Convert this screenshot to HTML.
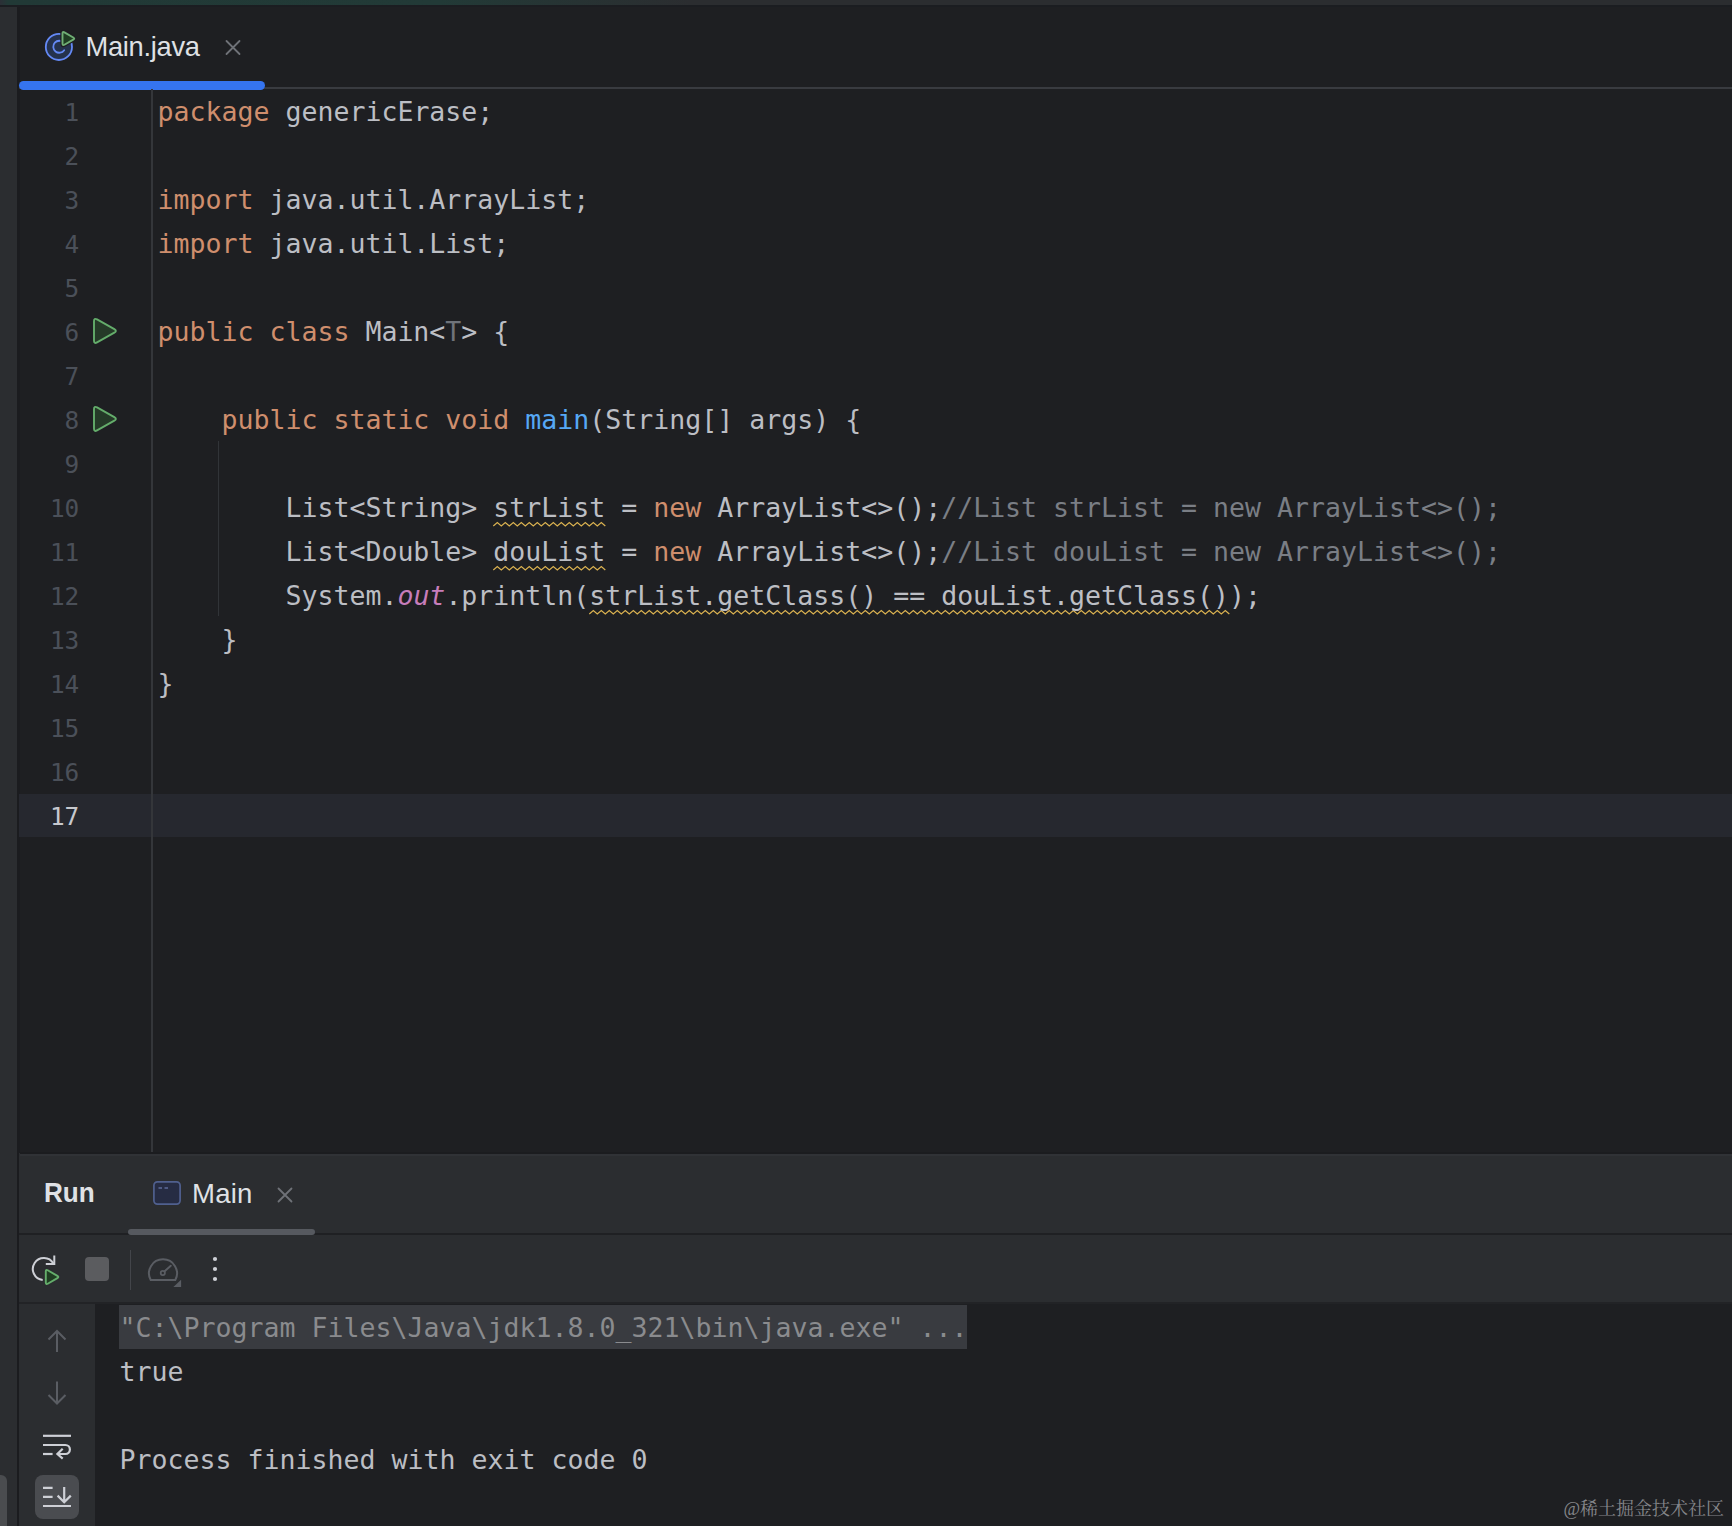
<!DOCTYPE html>
<html lang="en">
<head>
<meta charset="utf-8">
<title>Main.java</title>
<style>
html,body{margin:0;padding:0;}
body{width:1732px;height:1526px;overflow:hidden;background:#1e1f22;position:relative;font-family:"Liberation Sans","Noto Sans CJK SC",sans-serif;}
.abs{position:absolute;}
#topstrip{left:0;top:0;width:1732px;height:5px;background:linear-gradient(to right,#2b2f36 0px,#213936 8px,#223a37 440px,#2b2d30 690px,#2b2d30 100%);}
#topline{left:0;top:5px;width:1732px;height:2px;background:#1b1d21;}
#leftstrip{left:0;top:7px;width:17px;height:1519px;background:#2b2d30;}
#leftline{left:17px;top:7px;width:2.6px;height:1519px;background:#1b1c1f;}
/* editor tab */
#tabline{left:19px;top:87.1px;width:1713px;height:1.7px;background:#393b40;}
#tabblue{left:19px;top:80.5px;width:246px;height:9px;border-radius:4.5px;background:#3574f0;}
#tabtext{left:85.5px;top:30.3px;font-size:27.3px;line-height:34px;color:#dfe1e5;letter-spacing:-0.3px;white-space:pre;}
/* gutter */
#gutline{left:151.4px;top:89px;width:1.7px;height:1063px;background:#34363a;}
.ln{position:absolute;left:19px;width:60.3px;margin-top:0.8px;text-align:right;font-family:"DejaVu Sans Mono","Liberation Mono",monospace;font-size:24.4px;line-height:44px;height:44px;color:#4b5059;white-space:pre;}
.ln.cur{color:#c6c8ce;}
#caretrow{left:19.4px;top:794px;width:1713px;height:42.5px;background:#26282f;}
.cl{position:absolute;left:157.5px;font-family:"DejaVu Sans Mono","Liberation Mono",monospace;font-size:26.57px;line-height:44px;height:44px;color:#bcbec4;white-space:pre;}
.k{color:#cf8e6d;}
.m{color:#56a8f5;}
.c{color:#7a7e85;}
.s{color:#c77dbb;font-style:italic;}
.u{color:#6f737a;}
.w{}
#indent{left:217.5px;top:441px;width:1.5px;height:175px;background:#313438;}

/* run panel */
#runbg{left:19px;top:1153px;width:1713px;height:150px;background:#2b2d30;}
#runtop{left:19.6px;top:1151.8px;width:1713px;height:1.8px;background:#1b1c1f;}
#runhl{left:19.6px;top:1153.6px;width:1713px;height:2px;background:#303236;}
#runhdrline{left:19px;top:1233px;width:1713px;height:2px;background:#1f2023;}
#runul{left:128px;top:1229px;width:187px;height:6px;border-radius:3px;background:#56595f;}
#runbot{left:19px;top:1302px;width:1713px;height:2px;background:#222326;}
#runtitle{left:43.5px;top:1176px;font-size:27.8px;line-height:34px;font-weight:bold;transform-origin:0 0;transform:scaleX(0.94);color:#dfe1e5;white-space:pre;}
#runtab{left:192px;top:1176.5px;font-size:27.6px;line-height:34px;color:#dfe1e5;letter-spacing:0.2px;white-space:pre;}
#leftcol{left:19px;top:1304px;width:76px;height:222px;background:#2b2d30;}
#fold{left:119px;top:1304.7px;width:848px;height:44.2px;background:#393b40;}
.co{position:absolute;left:119.5px;font-family:"DejaVu Sans Mono","Liberation Mono",monospace;font-size:26.58px;line-height:44px;height:44px;color:#bcbec4;white-space:pre;}
#sel{left:35px;top:1475px;width:44px;height:44px;border-radius:8px;background:#4a4c50;}
#lhandle{left:0;top:1474.5px;width:7px;height:60px;border-radius:0 6px 0 0;background:#4a4c4f;}
#sep{left:129.5px;top:1250px;width:1.5px;height:40px;background:#43454a;}
#wm{right:8px;top:1495.5px;font-family:"Liberation Serif","Noto Serif CJK SC",serif;font-size:18px;line-height:26px;color:#85868a;white-space:pre;}
</style>
</head>
<body>
<div class="abs" id="topstrip"></div>
<div class="abs" id="topline"></div>
<div class="abs" id="leftstrip"></div>
<div class="abs" id="leftline"></div>

<!-- EDITOR TAB -->
<div class="abs" id="tabline"></div>
<div class="abs" id="tabblue"></div>
<div class="abs" id="tabtext">Main.java</div>
<svg class="abs" style="left:0;top:0" width="1732" height="1160" viewBox="0 0 1732 1160" fill="none" stroke-linecap="round" stroke-linejoin="round">
<!-- class icon -->
<circle cx="58.9" cy="46.9" r="13.1" fill="#25324d" stroke="#6489f5" stroke-width="1.8"/>
<path d="M63.6 42.6 A6 6 0 1 0 64.2 50.2" stroke="#6489f5" stroke-width="1.8"/>
<path d="M64.41 32.39 Q62.50 31.30 62.50 33.50 L62.50 43.60 Q62.50 45.80 64.41 44.71 L73.29 39.64 Q75.20 38.55 73.29 37.46 Z" fill="#1e1f22" stroke="#1e1f22" stroke-width="4.4"/>
<path d="M64.41 32.39 Q62.50 31.30 62.50 33.50 L62.50 43.60 Q62.50 45.80 64.41 44.71 L73.29 39.64 Q75.20 38.55 73.29 37.46 Z" fill="#1f3d22" stroke="#6fae74" stroke-width="1.9"/>
<!-- tab close -->
<path d="M226.5 41 L239.5 54 M239.5 41 L226.5 54" stroke="#6f7278" stroke-width="1.8"/>
<!-- warning squiggles -->
<path d="M493.3 526.0 L497.3 522.6 L501.3 526.0 L505.3 522.6 L509.3 526.0 L513.3 522.6 L517.3 526.0 L521.3 522.6 L525.3 526.0 L529.3 522.6 L533.3 526.0 L537.3 522.6 L541.3 526.0 L545.3 522.6 L549.3 526.0 L553.3 522.6 L557.3 526.0 L561.3 522.6 L565.3 526.0 L569.3 522.6 L573.3 526.0 L577.3 522.6 L581.3 526.0 L585.3 522.6 L589.3 526.0 L593.3 522.6 L597.3 526.0 L601.3 522.6 L605.3 526.0" stroke="#d9b150" stroke-width="1.25" stroke-linecap="butt" stroke-linejoin="miter"/>
<path d="M493.3 570.0 L497.3 566.6 L501.3 570.0 L505.3 566.6 L509.3 570.0 L513.3 566.6 L517.3 570.0 L521.3 566.6 L525.3 570.0 L529.3 566.6 L533.3 570.0 L537.3 566.6 L541.3 570.0 L545.3 566.6 L549.3 570.0 L553.3 566.6 L557.3 570.0 L561.3 566.6 L565.3 570.0 L569.3 566.6 L573.3 570.0 L577.3 566.6 L581.3 570.0 L585.3 566.6 L589.3 570.0 L593.3 566.6 L597.3 570.0 L601.3 566.6 L605.3 570.0" stroke="#d9b150" stroke-width="1.25" stroke-linecap="butt" stroke-linejoin="miter"/>
<path d="M589.3 614.0 L593.3 610.6 L597.3 614.0 L601.3 610.6 L605.3 614.0 L609.3 610.6 L613.3 614.0 L617.3 610.6 L621.3 614.0 L625.3 610.6 L629.3 614.0 L633.3 610.6 L637.3 614.0 L641.3 610.6 L645.3 614.0 L649.3 610.6 L653.3 614.0 L657.3 610.6 L661.3 614.0 L665.3 610.6 L669.3 614.0 L673.3 610.6 L677.3 614.0 L681.3 610.6 L685.3 614.0 L689.3 610.6 L693.3 614.0 L697.3 610.6 L701.3 614.0 L705.3 610.6 L709.3 614.0 L713.3 610.6 L717.3 614.0 L721.3 610.6 L725.3 614.0 L729.3 610.6 L733.3 614.0 L737.3 610.6 L741.3 614.0 L745.3 610.6 L749.3 614.0 L753.3 610.6 L757.3 614.0 L761.3 610.6 L765.3 614.0 L769.3 610.6 L773.3 614.0 L777.3 610.6 L781.3 614.0 L785.3 610.6 L789.3 614.0 L793.3 610.6 L797.3 614.0 L801.3 610.6 L805.3 614.0 L809.3 610.6 L813.3 614.0 L817.3 610.6 L821.3 614.0 L825.3 610.6 L829.3 614.0 L833.3 610.6 L837.3 614.0 L841.3 610.6 L845.3 614.0 L849.3 610.6 L853.3 614.0 L857.3 610.6 L861.3 614.0 L865.3 610.6 L869.3 614.0 L873.3 610.6 L877.3 614.0 L881.3 610.6 L885.3 614.0 L889.3 610.6 L893.3 614.0 L897.3 610.6 L901.3 614.0 L905.3 610.6 L909.3 614.0 L913.3 610.6 L917.3 614.0 L921.3 610.6 L925.3 614.0 L929.3 610.6 L933.3 614.0 L937.3 610.6 L941.3 614.0 L945.3 610.6 L949.3 614.0 L953.3 610.6 L957.3 614.0 L961.3 610.6 L965.3 614.0 L969.3 610.6 L973.3 614.0 L977.3 610.6 L981.3 614.0 L985.3 610.6 L989.3 614.0 L993.3 610.6 L997.3 614.0 L1001.3 610.6 L1005.3 614.0 L1009.3 610.6 L1013.3 614.0 L1017.3 610.6 L1021.3 614.0 L1025.3 610.6 L1029.3 614.0 L1033.3 610.6 L1037.3 614.0 L1041.3 610.6 L1045.3 614.0 L1049.3 610.6 L1053.3 614.0 L1057.3 610.6 L1061.3 614.0 L1065.3 610.6 L1069.3 614.0 L1073.3 610.6 L1077.3 614.0 L1081.3 610.6 L1085.3 614.0 L1089.3 610.6 L1093.3 614.0 L1097.3 610.6 L1101.3 614.0 L1105.3 610.6 L1109.3 614.0 L1113.3 610.6 L1117.3 614.0 L1121.3 610.6 L1125.3 614.0 L1129.3 610.6 L1133.3 614.0 L1137.3 610.6 L1141.3 614.0 L1145.3 610.6 L1149.3 614.0 L1153.3 610.6 L1157.3 614.0 L1161.3 610.6 L1165.3 614.0 L1169.3 610.6 L1173.3 614.0 L1177.3 610.6 L1181.3 614.0 L1185.3 610.6 L1189.3 614.0 L1193.3 610.6 L1197.3 614.0 L1201.3 610.6 L1205.3 614.0 L1209.3 610.6 L1213.3 614.0 L1217.3 610.6 L1221.3 614.0 L1225.3 610.6 L1229.3 614.0" stroke="#d9b150" stroke-width="1.25" stroke-linecap="butt" stroke-linejoin="miter"/>
<!-- gutter run icons -->
<path d="M97.05 319.42 Q94.00 317.70 94.00 321.20 L94.00 340.60 Q94.00 344.10 97.05 342.38 L114.35 332.62 Q117.40 330.90 114.35 329.18 Z" fill="#253a28" stroke="#64ad6b" stroke-width="1.9"/>
<path d="M97.05 407.42 Q94.00 405.70 94.00 409.20 L94.00 428.60 Q94.00 432.10 97.05 430.38 L114.35 420.62 Q117.40 418.90 114.35 417.18 Z" fill="#253a28" stroke="#64ad6b" stroke-width="1.9"/>
</svg>

<!-- EDITOR -->
<div class="abs" id="caretrow"></div>
<div class="abs" id="gutline"></div>
<div class="abs" id="indent"></div>
<div class="ln" style="top:90px">1</div>
<div class="cl" style="top:90px"><span class="k">package</span> genericErase;</div>
<div class="ln" style="top:134px">2</div>
<div class="ln" style="top:178px">3</div>
<div class="cl" style="top:178px"><span class="k">import</span> java.util.ArrayList;</div>
<div class="ln" style="top:222px">4</div>
<div class="cl" style="top:222px"><span class="k">import</span> java.util.List;</div>
<div class="ln" style="top:266px">5</div>
<div class="ln" style="top:310px">6</div>
<div class="cl" style="top:310px"><span class="k">public class</span> Main&lt;<span class="u">T</span>&gt; {</div>
<div class="ln" style="top:354px">7</div>
<div class="ln" style="top:398px">8</div>
<div class="cl" style="top:398px">    <span class="k">public static void</span> <span class="m">main</span>(String[] args) {</div>
<div class="ln" style="top:442px">9</div>
<div class="ln" style="top:486px">10</div>
<div class="cl" style="top:486px">        List&lt;String&gt; <span class="w">strList</span> = <span class="k">new</span> ArrayList&lt;&gt;();<span class="c">//List strList = new ArrayList&lt;&gt;();</span></div>
<div class="ln" style="top:530px">11</div>
<div class="cl" style="top:530px">        List&lt;Double&gt; <span class="w">douList</span> = <span class="k">new</span> ArrayList&lt;&gt;();<span class="c">//List douList = new ArrayList&lt;&gt;();</span></div>
<div class="ln" style="top:574px">12</div>
<div class="cl" style="top:574px">        System.<span class="s">out</span>.println(<span class="w">strList.getClass() == douList.getClass()</span>);</div>
<div class="ln" style="top:618px">13</div>
<div class="cl" style="top:618px">    }</div>
<div class="ln" style="top:662px">14</div>
<div class="cl" style="top:662px">}</div>
<div class="ln" style="top:706px">15</div>
<div class="ln" style="top:750px">16</div>
<div class="ln cur" style="top:794px">17</div>


<div class="abs" id="runbg"></div>
<div class="abs" id="runtop"></div>
<div class="abs" id="runhl"></div>
<div class="abs" id="runhdrline"></div>
<div class="abs" id="runul"></div>
<div class="abs" id="runbot"></div>
<div class="abs" id="runtitle">Run</div>
<div class="abs" id="runtab">Main</div>
<div class="abs" id="sep"></div>
<div class="abs" id="leftcol"></div>
<div class="abs" id="sel"></div>
<div class="abs" id="lhandle"></div>
<div class="abs" id="fold"></div>
<div class="co" style="top:1306px;color:#8a8b8e">"C:\Program Files\Java\jdk1.8.0_321\bin\java.exe" ...</div>
<div class="co" style="top:1350px">true</div>
<div class="co" style="top:1438px">Process finished with exit code 0</div>
<div class="abs" id="wm">@稀土掘金技术社区</div>
<svg class="abs" style="left:0;top:1150px" width="300" height="376" viewBox="0 1150 300 376" fill="none" stroke-linecap="round" stroke-linejoin="round">
<!-- Main tab icon -->
<rect x="153.9" y="1181.9" width="26.2" height="22.2" rx="3.5" fill="#262c43" stroke="#50608f" stroke-width="1.7"/>
<path d="M158.5 1188 L162 1188 M164.5 1188 L168 1188" stroke="#4f5b84" stroke-width="1.8" stroke-linecap="butt"/>
<path d="M278.5 1188.5 L291.5 1201.5 M291.5 1188.5 L278.5 1201.5" stroke="#6f7278" stroke-width="1.8"/>
<!-- rerun -->
<path d="M42.7 1280 A11 11 0 1 1 53.4 1263.6" stroke="#ced0d6" stroke-width="2" stroke-linecap="butt"/>
<path d="M54.3 1255.5 L54.3 1264 L45.8 1264" stroke="#ced0d6" stroke-width="2" stroke-linecap="butt" stroke-linejoin="miter"/>
<path d="M47.70 1270.30 Q45.80 1269.20 45.80 1271.40 L45.80 1282.60 Q45.80 1284.80 47.70 1283.70 L57.40 1278.10 Q59.30 1277.00 57.40 1275.90 Z" fill="#2b2d30" stroke="#2b2d30" stroke-width="4.4"/>
<path d="M47.70 1270.30 Q45.80 1269.20 45.80 1271.40 L45.80 1282.60 Q45.80 1284.80 47.70 1283.70 L57.40 1278.10 Q59.30 1277.00 57.40 1275.90 Z" fill="#1f3d22" stroke="#64ad6b" stroke-width="1.9"/>
<!-- stop -->
<rect x="85" y="1257" width="24" height="24" rx="4" fill="#5b5c5f" stroke="none"/>
<!-- gauge -->
<path d="M150.7 1280 A14 14 0 1 1 175.3 1280 Z" stroke="#5a5d63" stroke-width="2"/>
<circle cx="162.8" cy="1273" r="2.1" stroke="#5a5d63" stroke-width="1.8"/>
<path d="M164.4 1271.4 L170.8 1265.8" stroke="#5a5d63" stroke-width="2"/>
<path d="M181.1 1279.8 L181.1 1287 L173.4 1287 Z" fill="#5a5d63" stroke="none"/>
<!-- dots -->
<circle cx="215" cy="1259" r="2.1" fill="#ced0d6"/>
<circle cx="215" cy="1269" r="2.1" fill="#ced0d6"/>
<circle cx="215" cy="1279" r="2.1" fill="#ced0d6"/>
<!-- up / down -->
<path d="M57 1352 L57 1331 M48.5 1339.5 L57 1331 L65.5 1339.5" stroke="#5a5d63" stroke-width="2" stroke-linecap="butt" stroke-linejoin="miter"/>
<path d="M57 1381.5 L57 1403.5 M48.5 1395 L57 1403.5 L65.5 1395" stroke="#5a5d63" stroke-width="2" stroke-linecap="butt" stroke-linejoin="miter"/>
<!-- soft wrap -->
<g stroke="#ced0d6" stroke-width="2.2" stroke-linecap="butt" stroke-linejoin="miter">
<path d="M43 1435.8 L71 1435.8"/>
<path d="M43 1445 L65.4 1445 A4.5 4.5 0 0 1 65.4 1454 L58.5 1454"/>
<path d="M43 1454 L52.6 1454"/>
<path d="M62.7 1448.8 L57.4 1454 L62.7 1458.6"/>
<!-- scroll to end -->
<path d="M43 1487.9 L52.6 1487.9 M43 1496.9 L52.6 1496.9 M43 1506 L71 1506"/>
<path d="M64.2 1487 L64.2 1501.5 M57.6 1495.6 L64.2 1502.2 L70.8 1495.6"/>
</g>
</svg>

</body>
</html>
